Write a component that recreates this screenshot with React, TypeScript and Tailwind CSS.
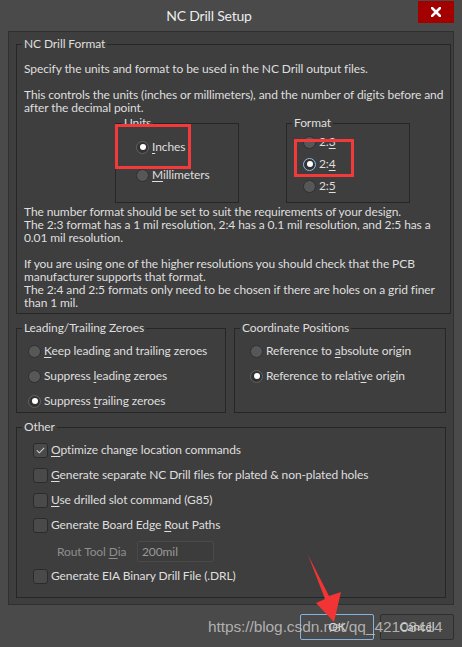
import React from "react";

function Radio({
  checked,
  focus,
  children,
  className = "",
}: {
  checked?: boolean;
  focus?: boolean;
  children: React.ReactNode;
  className?: string;
}) {
  return (
    <div className={`flex items-center h-[16px] ${className}`}>
      <span
        className={`w-[13px] h-[13px] rounded-full flex items-center justify-center shrink-0 border ${
          checked
            ? focus
              ? "bg-[#333333] border-[#93bde6]"
              : "bg-[#333333] border-[#646464]"
            : "bg-[#575757] border-[#2f2f2f]"
        }`}
      >
        {checked && <span className="w-[6px] h-[6px] rounded-full bg-white" />}
      </span>
      <span className="ml-[3px] whitespace-nowrap">{children}</span>
    </div>
  );
}

function Check({
  checked,
  children,
  className = "",
}: {
  checked?: boolean;
  children: React.ReactNode;
  className?: string;
}) {
  return (
    <div className={`flex items-center h-[16px] ${className}`}>
      <span className="w-[15px] h-[15px] rounded-[3px] bg-[#4a4a4a] border border-[#2b2b2b] flex items-center justify-center shrink-0">
        {checked && (
          <svg width="9" height="7" viewBox="0 0 9 7">
            <path d="M0.8 3.4 L3.4 5.8 L8.2 0.8" fill="none" stroke="#cfcfcf" strokeWidth="1.1" />
          </svg>
        )}
      </span>
      <span className="ml-[3px] whitespace-nowrap">{children}</span>
    </div>
  );
}

const U = ({ children }: { children: React.ReactNode }) => (
  <span className="underline underline-offset-[2px] decoration-[1px]">{children}</span>
);

export default function App() {
  return (
    <div className="relative w-[462px] h-[647px] bg-[#4a4a4a] overflow-hidden font-['Lato',sans-serif] text-[12px] tracking-[-0.1px] text-[#dedede]">
      {/* title bar */}
      <div className="flex h-[31px]">
        <div className="flex-1 text-center leading-[31px] text-[14px] tracking-[-0.2px] text-[#ececec]">NC Drill Setup</div>
        <div className="mt-[1px] mr-[8px] w-[36px] h-[22px] bg-[#a30000] flex items-center justify-center">
          <svg width="10" height="10" viewBox="0 0 10 10">
            <path d="M1 1 L9 9 M9 1 L1 9" stroke="white" strokeWidth="2.6" strokeLinecap="square" />
          </svg>
        </div>
      </div>

      {/* main panel */}
      <div className="mx-[8px] h-[574px] border border-[#303030] bg-[#3e3e3e] px-[7px] pt-[4px]">
        {/* NC Drill Format */}
        <fieldset className="h-[278px] border border-[#262626] px-[7px]">
          <legend className="ml-[-2px] px-[2px] leading-[16px]">NC Drill Format</legend>
          <div className="leading-[13px] pt-[10px] whitespace-nowrap">
            <div>Specify the units and format to be used in the NC Drill output files.</div>
            <div className="h-[13px]" />
            <div>This controls the units (inches or millimeters), and the number of digits before and</div>
            <div>after the decimal point.</div>
          </div>
          <div className="flex mt-[1px] ml-[91px] gap-[47px]">
            <fieldset className="w-[124px] h-[88px] border border-[#262626] pl-[20px]">
              <legend className="ml-[-14px] px-[2px] leading-[16px]">Units</legend>
              <Radio checked className="mt-[8px]">
                <U>I</U>nches
              </Radio>
              <Radio className="mt-[12px]">
                <U>M</U>illimeters
              </Radio>
            </fieldset>
            <fieldset className="w-[124px] h-[88px] border border-[#262626] pl-[16px]">
              <legend className="ml-[-11px] px-[2px] leading-[16px]">Format</legend>
              <Radio className="mt-[3px]">
                2:<U>3</U>
              </Radio>
              <Radio checked focus className="mt-[6px]">
                2:<U>4</U>
              </Radio>
              <Radio className="mt-[6px]">
                2:<U>5</U>
              </Radio>
            </fieldset>
          </div>
          <div className="leading-[13px] mt-[2px] whitespace-nowrap">
            <div>The number format should be set to suit the requirements of your design.</div>
            <div>The 2:3 format has a 1 mil resolution, 2:4 has a 0.1 mil resolution, and 2:5 has a</div>
            <div>0.01 mil resolution.</div>
            <div className="h-[13px]" />
            <div>If you are using one of the higher resolutions you should check that the PCB</div>
            <div>manufacturer supports that format.</div>
            <div>The 2:4 and 2:5 formats only need to be chosen if there are holes on a grid finer</div>
            <div>than 1 mil.</div>
          </div>
        </fieldset>

        {/* zeroes + coordinates */}
        <div className="flex gap-[8px] mt-[6px]">
          <fieldset className="w-[210px] h-[93px] border border-[#262626] pl-[11px]">
            <legend className="ml-[-6px] px-[2px] leading-[16px]">Leading/Trailing Zeroes</legend>
            <Radio className="mt-[7px]">
              <U>K</U>eep leading and trailing zeroes
            </Radio>
            <Radio className="mt-[9px]">
              Suppress <U>l</U>eading zeroes
            </Radio>
            <Radio checked className="mt-[9px]">
              Suppress <U>t</U>railing zeroes
            </Radio>
          </fieldset>
          <fieldset className="w-[212px] h-[93px] border border-[#262626] pl-[15px]">
            <legend className="ml-[-10px] px-[2px] leading-[16px]">Coordinate Positions</legend>
            <Radio className="mt-[7px]">
              Reference to <U>a</U>bsolute origin
            </Radio>
            <Radio checked className="mt-[9px]">
              Reference to relati<U>v</U>e origin
            </Radio>
          </fieldset>
        </div>

        {/* Other */}
        <fieldset className="mt-[6px] h-[179px] border border-[#262626] pl-[16px]">
          <legend className="ml-[-11px] px-[2px] leading-[16px]">Other</legend>
          <Check checked className="mt-[7px]">
            <U>O</U>ptimize change location commands
          </Check>
          <Check className="mt-[9px]">
            <U>G</U>enerate separate NC Drill files for plated &amp; non-plated holes
          </Check>
          <Check className="mt-[9px]">
            <U>U</U>se drilled slot command (G85)
          </Check>
          <Check className="mt-[9px]">
            Generate Board Edge <U>R</U>out Paths
          </Check>
          <div className="flex items-center mt-[8px] ml-[24px] h-[21px]">
            <span className="w-[80px] text-[#8e8e8e] whitespace-nowrap">
              Rout Tool <U>D</U>ia
            </span>
            <div className="w-[77px] h-[21px] border border-[#4a4a4a] rounded-[2px] bg-[#3c3c3c] text-[#9a9a9a] pl-[4px] leading-[19px]">
              200mil
            </div>
          </div>
          <Check className="mt-[6px]">Generate EIA Binary Drill File (.DRL)</Check>
        </fieldset>
      </div>

      {/* buttons */}
      <div className="flex justify-end gap-[6px] mt-[9px] mr-[8px]">
        <div className="w-[74px] h-[26px] border border-[#86b3de] rounded-[2px] bg-[#4a4a4a] flex items-center justify-center">
          OK
        </div>
        <div className="w-[74px] h-[26px] border border-[#2e2e2e] rounded-[2px] bg-[#474747] flex items-center justify-center">
          Cancel
        </div>
      </div>

      {/* annotations overlay */}
      <div className="absolute left-[115px] top-[124px] w-[76px] h-[45px] border-[3px] border-[#f23a3a]" />
      <div className="absolute left-[294px] top-[139px] w-[60px] h-[38px] border-[3px] border-[#f23a3a]" />
      <svg className="absolute left-0 top-0" width="462" height="647" viewBox="0 0 462 647">
        <path d="M308 555 L329 596 L341 592 L334 622 L316 603 L325 599 Z" fill="#f23434" />
      </svg>
      <div className="absolute left-[208px] top-[617px] text-[15.5px] leading-[20px] text-[#c4c4c4]/85 font-['Liberation_Sans',sans-serif] whitespace-nowrap">
        https://blog.csdn.net/qq_42108414
      </div>
    </div>
  );
}
